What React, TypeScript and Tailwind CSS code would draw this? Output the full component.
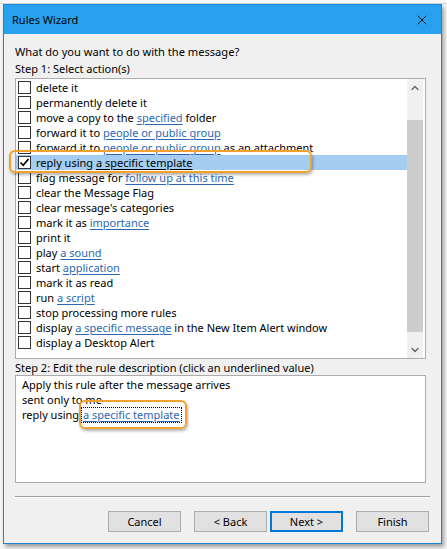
import { X, ChevronUp, ChevronDown } from "lucide-react";

type Part = { t: string; link?: boolean };

const actions: Part[][] = [
  [{ t: "delete it" }],
  [{ t: "permanently delete it" }],
  [{ t: "move a copy to the " }, { t: "specified", link: true }, { t: " folder" }],
  [{ t: "forward it to " }, { t: "people or public group", link: true }],
  [{ t: "forward it to " }, { t: "people or public group", link: true }, { t: " as an attachment" }],
  [{ t: "reply using " }, { t: "a specific template", link: true }],
  [{ t: "flag message for " }, { t: "follow up at this time", link: true }],
  [{ t: "clear the Message Flag" }],
  [{ t: "clear message's categories" }],
  [{ t: "mark it as " }, { t: "importance", link: true }],
  [{ t: "print it" }],
  [{ t: "play " }, { t: "a sound", link: true }],
  [{ t: "start " }, { t: "application", link: true }],
  [{ t: "mark it as read" }],
  [{ t: "run " }, { t: "a script", link: true }],
  [{ t: "stop processing more rules" }],
  [{ t: "display " }, { t: "a specific message", link: true }, { t: " in the New Item Alert window" }],
  [{ t: "display a Desktop Alert" }],
];

const SELECTED = 5;

function Checkbox({ checked }: { checked: boolean }) {
  return (
    <div className="w-[13px] h-[13px] border border-[#333333] bg-white shrink-0 flex items-center justify-center">
      {checked && (
        <svg width="11" height="11" viewBox="0 0 11 11">
          <path d="M1.5 5.5 L4.2 8.3 L9.5 2" fill="none" stroke="#000" strokeWidth="1.7" />
        </svg>
      )}
    </div>
  );
}

function ActionRow({ parts, selected }: { parts: Part[]; selected: boolean }) {
  return (
    <div className={`h-[15px] flex items-center pl-[2px] ${selected ? "bg-[#a4cdf1]" : ""}`}>
      <Checkbox checked={selected} />
      <div className="ml-[5px] whitespace-pre text-black leading-[13px]">
        {parts.map((p, i) =>
          p.link ? (
            <span
              key={i}
              className={`underline underline-offset-[2px] ${selected ? "text-black" : "text-[#2d67b3]"}`}
            >
              {p.t}
            </span>
          ) : (
            <span key={i}>{p.t}</span>
          )
        )}
      </div>
    </div>
  );
}

function Button({ label, focused }: { label: string; focused?: boolean }) {
  return (
    <div
      className={`w-[73px] h-[21px] flex items-center justify-center bg-[#e1e1e1] text-black ${
        focused ? "border-2 border-[#0078d7]" : "border border-[#adadad]"
      }`}
    >
      {label}
    </div>
  );
}

export default function App() {
  return (
    <div
      className="relative w-[447px] h-[549px] bg-[#f5f5f5] overflow-hidden text-[11px] leading-[15px] text-black"
      style={{ fontFamily: '"Noto Sans", "Segoe UI", sans-serif' }}
    >
      <div className="h-[4px] bg-[#f7f7f7] border-b border-[#d8d8d8]" />
      <div className="ml-[3px] w-[439px] h-[540px] border border-[#1883d7] bg-[#f0f0f0] flex flex-col shadow-[2px_3px_4px_rgba(0,0,0,0.35)]">
        {/* title bar */}
        <div className="h-[29px] bg-[#28a2ee] flex items-center justify-between pl-[8px] pr-[11px] shrink-0">
          <span className="text-[11px] text-black">Rules Wizard</span>
          <X size={16} strokeWidth={1.3} className="text-black" />
        </div>

        {/* body */}
        <div className="px-[11px] pt-[10px] flex flex-col">
          <div className="text-[11.1px]">What do you want to do with the message?</div>
          <div className="mt-[2px]">Step 1: Select action(s)</div>

          <div className="mt-[2px] w-[411px] h-[281px] border border-[#acacac] bg-white flex">
            <div className="flex-1 pt-[1px]">
              {actions.map((parts, i) => (
                <ActionRow key={i} parts={parts} selected={i === SELECTED} />
              ))}
            </div>
            <div className="w-[16px] mr-[2px] bg-[#f0f0f0] flex flex-col">
              <div className="h-[17px] flex items-center justify-center">
                <ChevronUp size={12} strokeWidth={2.5} className="text-[#606060]" />
              </div>
              <div className="h-[24px]" />
              <div className="h-[212px] bg-[#cdcdcd]" />
              <div className="flex-1" />
              <div className="h-[17px] flex items-center justify-center">
                <ChevronDown size={12} strokeWidth={2.5} className="text-[#606060]" />
              </div>
            </div>
          </div>

          <div className="mt-[1px]">Step 2: Edit the rule description (click an underlined value)</div>
          <div className="w-[411px] h-[108px] border border-[#acacac] bg-white pl-[6px] pt-[1px]">
            <div>Apply this rule after the message arrives</div>
            <div>sent only to me</div>
            <div className="flex">
              <span className="whitespace-pre">reply using </span>
              <span className="outline outline-1 outline-dotted outline-black text-[#2d67b3] underline underline-offset-[2px] px-[1px] leading-[13px] mt-[1px]">
                a specific template
              </span>
            </div>
          </div>

          <div className="mt-[13px] h-[2px] border-t border-[#a0a0a0] border-b border-b-white" />

          <div className="mt-[13px] flex justify-end pr-[1px]">
            <Button label="Cancel" />
            <div className="w-[13px]" />
            <Button label="< Back" />
            <div className="w-[3px]" />
            <Button label="Next >" focused />
            <div className="w-[13px]" />
            <Button label="Finish" />
          </div>
        </div>
      </div>

      {/* orange annotation boxes */}
      <div className="absolute left-[9px] top-[150px] w-[303px] h-[23px] border-2 border-[#f2a12e] rounded-[6px] shadow-[1px_2px_3px_rgba(0,0,0,0.3)]" />
      <div className="absolute left-[79px] top-[400px] w-[108px] h-[29px] border-2 border-[#f2a12e] rounded-[6px] shadow-[1px_2px_3px_rgba(0,0,0,0.3)]" />
    </div>
  );
}
